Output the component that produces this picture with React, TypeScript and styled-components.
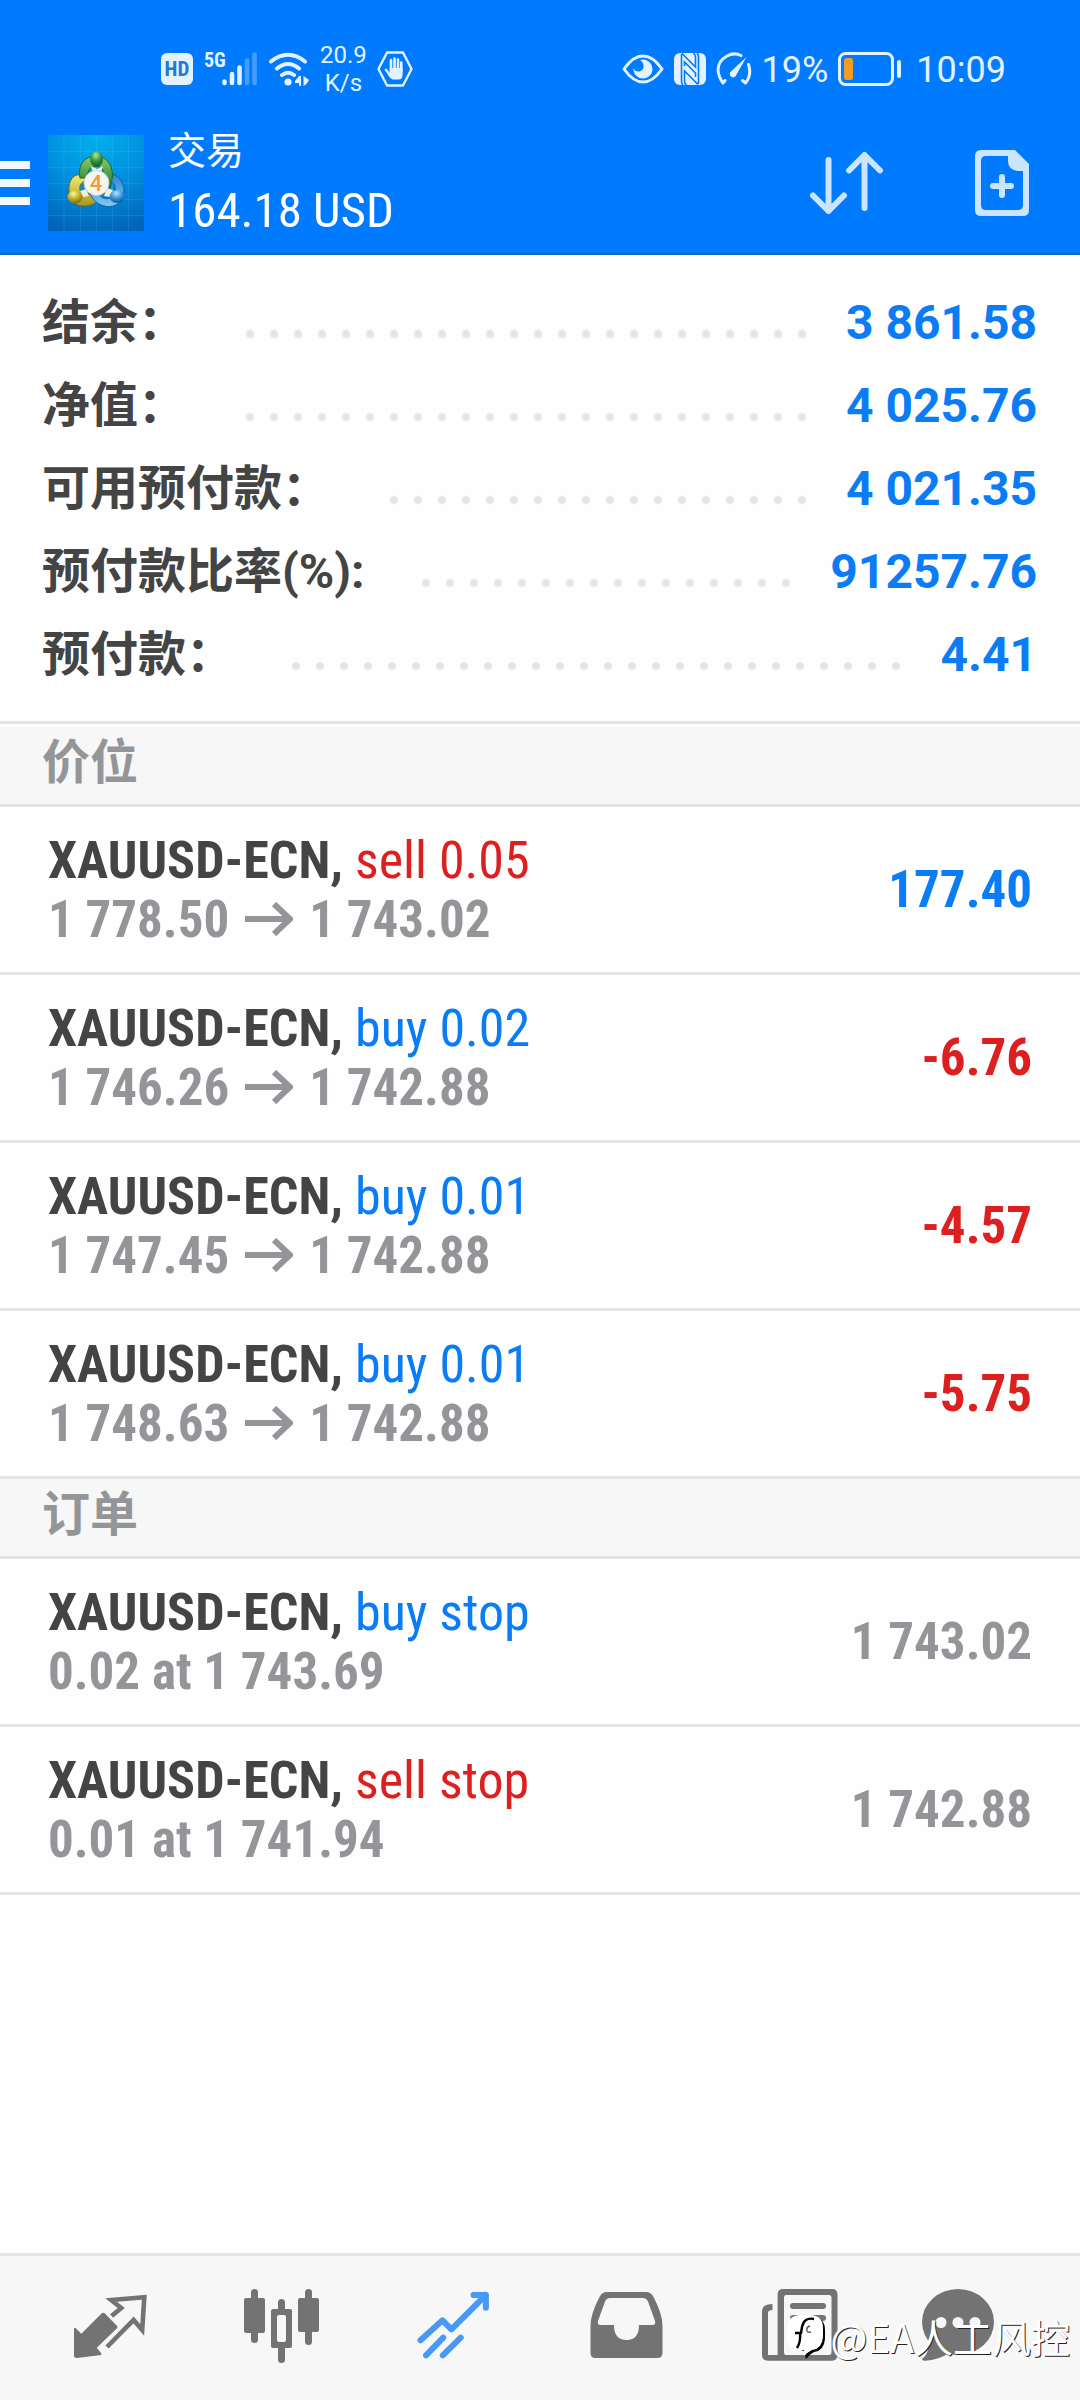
import React from "react";
import styled, { createGlobalStyle } from "styled-components";

const sans = `Roboto, "Noto Sans CJK SC", sans-serif`;
const condensed = `"Roboto Condensed", Roboto, "Noto Sans CJK SC", sans-serif`;

const color = {
  brand: "#007aff",
  pale: "#e4f2ff",
  buy: "#0a7cf5",
  sell: "#dc2020",
  ink: "#444444",
  muted: "#949599",
  line: "#e4e4e4",
  panel: "#f7f7f7",
  icon: "#737373",
  active: "#4799f5",
};

const GlobalStyle = createGlobalStyle`
  *, *::before, *::after { box-sizing: border-box; }
  body { margin: 0; background: #fefefe; font-family: ${sans}; }
  button { border: 0; padding: 0; background: none; font: inherit; color: inherit; cursor: pointer; }
  ul, dl, dd, p, h1, h2 { margin: 0; padding: 0; }
  ul { list-style: none; }
  svg { display: block; flex: none; }
`;

const Screen = styled.div`
  display: flex;
  flex-direction: column;
  min-height: 100vh;
`;

const Header = styled.header`
  background: ${color.brand};
  border-bottom: 2px solid #1767bd;
  color: #fff;
`;

const StatusBar = styled.div`
  display: flex;
  justify-content: space-between;
  align-items: center;
  height: 127px;
  padding: 10px 74px 0 160px;
  color: ${color.pale};
`;

const StatusGroup = styled.div`
  display: flex;
  align-items: center;
  gap: 10px;
`;

const NetworkSpeed = styled.span`
  font-size: 24px;
  line-height: 28px;
  text-align: center;
`;

const StatusText = styled.span`
  padding-top: 2px;
  font-size: 36px;
  line-height: 40px;
`;

const TimeText = styled(StatusText)`
  margin-left: 4px;
`;

const Toolbar = styled.div`
  display: flex;
  align-items: center;
  height: 126px;
  padding-right: 50px;
  padding-bottom: 14px;
`;

const MenuButton = styled.button`
  display: flex;
  flex-direction: column;
  gap: 10px;
  width: 48px;
`;

const MenuBar = styled.span`
  width: 30px;
  height: 8px;
  background: #f0f9ff;
`;

const Titles = styled.div`
  flex: 1;
  padding-left: 24px;
`;

const Title = styled.h1`
  font-size: 38px;
  font-weight: 400;
  line-height: 56px;
`;

const Balance = styled.p`
  font-family: ${condensed};
  font-size: 49px;
  line-height: 64px;
`;

const Actions = styled.div`
  display: flex;
  align-items: center;
  gap: 90px;
`;

const Summary = styled.dl`
  padding: 26px 43px 25px 42px;
  border-bottom: 3px solid ${color.line};
  margin-bottom: 3px;
`;

const SummaryRow = styled.div`
  display: flex;
  align-items: center;
  height: 83px;
`;

const SummaryLabel = styled.dt`
  color: ${color.ink};
  font-size: 48px;
  font-weight: 700;
  line-height: 80px;
`;

const SummaryValue = styled.dd`
  color: ${color.buy};
  font-size: 48px;
  font-weight: 700;
  line-height: 80px;
`;

const Leader = styled.span`
  flex: 1;
  display: flex;
  flex-flow: row-reverse wrap;
  height: 10px;
  margin: 22px 32px 0 40px;
  overflow: hidden;
`;

const Dot = styled.i`
  width: 24px;
  height: 10px;
  background: radial-gradient(circle, ${color.line} 3px, transparent 5px);
`;

const SectionTitle = styled.h2`
  height: 80px;
  padding: 0 42px;
  background: ${color.panel};
  border-bottom: 3px solid ${color.line};
  color: ${color.muted};
  font-size: 48px;
  font-weight: 700;
  line-height: 72px;
`;

const TradeRow = styled.li`
  display: flex;
  align-items: center;
  justify-content: space-between;
  height: 168px;
  padding: 0 48px;
  border-bottom: 3px solid ${color.line};
  font-family: ${condensed};
  font-size: 51px;
  font-weight: 700;
  line-height: 59px;
`;

const Symbol = styled.p`
  color: ${color.ink};
  font-size: 52px;
`;

const Side = styled.span<{ $tone: string }>`
  color: ${(p) => p.$tone};
  font-weight: 400;
`;

const Detail = styled.p`
  display: flex;
  align-items: center;
  gap: 16px;
  color: ${color.muted};
`;

const Amount = styled.span<{ $tone: string }>`
  color: ${(p) => p.$tone};
`;

const Nav = styled.nav`
  position: relative;
  display: flex;
  align-items: center;
  height: 147px;
  margin-top: auto;
  padding: 0 24px;
  background: ${color.panel};
  border-top: 3px solid ${color.line};
`;

const NavLink = styled.a<{ $active?: boolean }>`
  flex: 1;
  display: flex;
  justify-content: center;
  color: ${(p) => (p.$active ? color.active : color.icon)};
`;

const Watermark = styled.div`
  position: absolute;
  right: 10px;
  bottom: 36px;
  display: flex;
  align-items: center;
  gap: 2px;
  color: #fff;
  font-family: "Noto Sans CJK SC", sans-serif;
  font-size: 39px;
  font-weight: 400;
  line-height: 56px;
  text-shadow: 1px 1px 0 #222;
  pointer-events: none;
`;

const Logo = () => (
  <svg width="96" height="96" viewBox="0 0 96 96" role="img" aria-label="MetaTrader 4">
    <defs>
      <radialGradient id="bg" cx="50%" cy="0%" r="105%">
        <stop offset="0" stopColor="#00b2ee" />
        <stop offset="0.5" stopColor="#0090de" />
        <stop offset="1" stopColor="#0064b8" />
      </radialGradient>
      <linearGradient id="green" x1="0" y1="0" x2="0" y2="1">
        <stop offset="0" stopColor="#8ccf72" />
        <stop offset="1" stopColor="#17732c" />
      </linearGradient>
      <linearGradient id="yellow" x1="0" y1="0" x2="0" y2="1">
        <stop offset="0" stopColor="#f4ee70" />
        <stop offset="1" stopColor="#a8951a" />
      </linearGradient>
      <linearGradient id="blue" x1="0" y1="0" x2="0" y2="1">
        <stop offset="0" stopColor="#2c86cf" />
        <stop offset="1" stopColor="#7ccaf5" />
      </linearGradient>
      <radialGradient id="greenBall" cx="45%" cy="25%" r="75%">
        <stop offset="0" stopColor="#b5e8a0" />
        <stop offset="0.5" stopColor="#3f9a40" />
        <stop offset="1" stopColor="#0e5c22" />
      </radialGradient>
      <radialGradient id="yellowBall" cx="40%" cy="25%" r="75%">
        <stop offset="0" stopColor="#fbf7a8" />
        <stop offset="0.5" stopColor="#c4b52c" />
        <stop offset="1" stopColor="#7d6c0c" />
      </radialGradient>
      <radialGradient id="blueBall" cx="45%" cy="25%" r="75%">
        <stop offset="0" stopColor="#b8e6ff" />
        <stop offset="0.5" stopColor="#3c9ade" />
        <stop offset="1" stopColor="#0c5499" />
      </radialGradient>
    </defs>
    <rect width="96" height="96" fill="url(#bg)" />
    <path d="M16 0V96M32.500 0V96M48.500 0V96M64.500 0V96M80.500 0V96M0 16.500H96M0 32.500H96M0 48.500H96M0 64.500H96M0 80.500H96" stroke="#7fd4ff" strokeOpacity="0.14" />
    <path d="M29 40C17 43 18 70 34 71C44 72 52 66 55 58L46 54C42 63 33 61 32 55C31 50 34 46 39 46L41 39Z" fill="url(#yellow)" stroke="#766b12" />
    <path d="M65 39C76 44 80 58 71 68C61 76 45 70 41 56L50 57C53 65 62 66 66 59C69 52 66 46 60 45Z" fill="url(#blue)" stroke="#185c9d" />
    <path d="M32 43C29 27 40 20 50 21C62 23 69 37 61 54L53 51C58 42 57 32 49 31C42 31 39 36 40 43Z" fill="url(#green)" stroke="#17682a" />
    <path d="M43 31L49 34L55 31L53 38H45ZM32 56L35 62L41 61L38 54ZM65 55L62 62L56 61L59 53Z" fill="#e9f3df" />
    <ellipse cx="48.500" cy="24" rx="6.500" ry="7.500" fill="url(#greenBall)" />
    <ellipse cx="27" cy="62" rx="7.500" ry="6.500" fill="url(#yellowBall)" />
    <ellipse cx="69" cy="61.500" rx="7.500" ry="6.500" fill="url(#blueBall)" />
    <circle cx="48.500" cy="48" r="12.500" fill="#f5f5f3" stroke="#c9ccc5" strokeWidth="0.800" />
    <text x="48" y="56" textAnchor="middle" fontFamily="Roboto" fontWeight="500" fontSize="22" fill="#f39a38">4</text>
  </svg>
);

const HdIcon = () => (
  <svg width="34" height="34" viewBox="0 0 34 34">
    <rect x="1" y="1" width="32" height="32" rx="6" fill={color.pale} />
    <text x="17" y="24" textAnchor="middle" fontFamily="Roboto Condensed" fontWeight="700" fontSize="21" fill="#2478d8">HD</text>
  </svg>
);

const SignalIcon = () => (
  <svg width="54" height="46" viewBox="0 -6 54 46">
    <text x="0" y="15" fontFamily="Roboto Condensed" fontWeight="700" fontSize="20" fill={color.pale}>5G</text>
    <g strokeWidth="4.600" strokeLinecap="round" stroke={color.pale}>
      <path d="M20.500 29.500V31M28 22V31M35.500 15.500V31" />
      <path d="M43 8.500V31M50.500 2.500V31" opacity="0.300" />
    </g>
  </svg>
);

const WifiIcon = () => (
  <svg width="42" height="34" viewBox="0 0 42 34">
    <g fill="none" stroke={color.pale} strokeWidth="4" strokeLinecap="round">
      <path d="M3 9.500Q20 -4 37 9.500M9 16.500Q20 7.500 31 16.500M14 23Q20 18.500 26 23" />
    </g>
    <circle cx="20" cy="30" r="3.600" fill={color.pale} />
    <path d="M33 24V34H31V31H27V29L31 24ZM35.500 24L41 28L38.500 32L35.500 34Z" fill={color.pale} />
  </svg>
);

const HandIcon = () => (
  <svg width="36" height="36" viewBox="0 0 36 36">
    <path d="M10 1.500H26L34.500 18L26 34.500H10L1.500 18Z" fill="none" stroke={color.pale} strokeWidth="2.400" strokeLinejoin="round" />
    <g fill="none" stroke={color.pale} strokeWidth="2.600" strokeLinecap="round">
      <path d="M14 9V19M17.500 7.500V19M21 8.500V19M24.300 11.500V20M9 19L14 25" />
    </g>
    <path d="M12.700 17H25.600V24Q25 28.500 22 28.500H16Q13 28 10 22L12.700 23Z" fill={color.pale} />
  </svg>
);

const EyeIcon = () => (
  <svg width="42" height="30" viewBox="0 0 42 30">
    <path d="M2 15Q11 2 21 2Q31 2 40 15Q31 28 21 28Q11 28 2 15Z" fill="none" stroke={color.pale} strokeWidth="3" strokeLinejoin="round" />
    <path d="M18 6A9.500 9.500 0 1 1 11.500 14Q13 18 17.500 17.500Q22 16 21.500 11Q21 7.500 18 6Z" fill={color.pale} />
  </svg>
);

const NfcIcon = () => (
  <svg width="32" height="34" viewBox="0 0 32 34">
    <rect y="1" width="32" height="32" rx="6" fill={color.pale} />
    <path d="M8 1.500L21.500 15V5Q21.500 2.500 19.500 1M24 32.500L10.500 19V29Q10.500 31.500 12.500 33M7.500 2V29Q7.500 32 9 33M24.500 32V5Q24.500 2 23 1M10.500 14V10L21.500 21V25" fill="none" stroke={color.brand} strokeWidth="1.600" />
  </svg>
);

const GaugeIcon = () => (
  <svg width="36" height="34" viewBox="0 0 36 34">
    <g fill="none" stroke={color.pale} strokeWidth="3" strokeLinecap="round" strokeLinejoin="round">
      <path d="M25 3.500Q18 0 11 4Q2 9 2 18Q2.500 25 7 31L9 28.500M32.500 12.500Q36 23 29.500 31L26.500 28.500" />
    </g>
    <path d="M30.500 5L20.500 22.500A3.400 3.400 0 1 1 15.500 19Z" fill={color.pale} />
  </svg>
);

const BatteryIcon = () => (
  <svg width="64" height="34" viewBox="0 0 64 34">
    <rect x="1.500" y="1.500" width="53" height="31" rx="6" fill="none" stroke={color.pale} strokeWidth="3" />
    <rect x="6" y="6" width="9" height="22" rx="2.500" fill="#f59a23" />
    <rect x="59" y="8" width="4" height="18" rx="2" fill={color.pale} />
  </svg>
);

const SortIcon = () => (
  <svg width="74" height="66" viewBox="0 0 74 66" fill="none" stroke="#cbe4ff" strokeWidth="6" strokeLinecap="round" strokeLinejoin="round">
    <path d="M18.500 10V61M3 45.500L18.500 61L34 45.500M54.500 58V5M39 20.500L54.500 5L70 20.500" />
  </svg>
);

const NewOrderIcon = () => (
  <svg width="56" height="66" viewBox="0 0 56 66">
    <path d="M7 0H41L55 14V60Q55 66 49 66H7Q1 66 1 60V6Q1 0 7 0ZM34 6H12Q7 6 7 11V55Q7 60 12 60H44Q49 60 49 55V21H44Q34 20 34 11Z" fill="#cbe4ff" fillRule="evenodd" />
    <path d="M28 27V45M19 36H37" stroke="#cbe4ff" strokeWidth="6" strokeLinecap="round" />
  </svg>
);

const PriceArrow = () => (
  <svg width="48" height="34" viewBox="0 0 48 34" fill="none" stroke={color.muted} strokeWidth="6">
    <path d="M0 17H45M29 2L45 17L29 32" />
  </svg>
);

const NavIcon = ({ children }: { children: React.ReactNode }) => (
  <svg width="96" height="96" viewBox="0 0 96 96" fill="currentColor">{children}</svg>
);

const navItems = [
  {
    label: "行情",
    icon: (
      <>
        <path d="M12 48.700Q12 47.500 13.500 48L19.300 53.700L39.500 33.600Q41.300 32 43 33.600L55 46Q56 47.200 55 48.200L34.800 67.700L39.600 73.700L39 75L15 78Q12 78 12 75.500Z" />
        <path d="M49.600 36L59.200 28L49.200 20L82.300 17.200L80.200 50L71.600 40L45 67" fill="none" stroke="currentColor" strokeWidth="4.600" />
      </>
    ),
  },
  {
    label: "图表",
    icon: (
      <>
        <rect x="10" y="18" width="21" height="35" rx="2" />
        <rect x="17" y="9" width="7" height="54" rx="3.500" />
        <path d="M39 29H56Q58 29 58 31V66Q58 68 56 68H39Q37 68 37 66V31Q37 29 39 29ZM45 35Q43 35 43 37V60Q43 62 45 62H50Q52 62 52 60V37Q52 35 50 35Z" fillRule="evenodd" />
        <path d="M44 30V22.500A3.500 3.500 0 0 1 51 22.500V30ZM44 67V79.500A3.500 3.500 0 0 0 51 79.500V67Z" />
        <rect x="64" y="18" width="21" height="34" rx="2" />
        <rect x="71" y="9" width="7" height="56" rx="3.500" />
      </>
    ),
  },
  {
    label: "交易",
    active: true,
    icon: (
      <path
        d="M14.500 60.300L36.500 40.300L45.400 49.300L79.900 15M67.500 15H79.900V27.700M20 75.300L37.200 57.700M36.800 75.300L54.700 57.700"
        fill="none"
        stroke="currentColor"
        strokeWidth="6"
        strokeLinecap="round"
        strokeLinejoin="round"
      />
    ),
  },
  {
    label: "历史",
    icon: (
      <path
        d="M29 12H68Q73 12 75.500 17Q84.500 34 84.500 46V73Q84.500 78 79.500 78H17.500Q12.500 78 12.500 73V46Q12.500 34 21.500 17Q24 12 29 12ZM32 18Q28.500 18 27 21.500L20 41Q19 45 22.500 45H36Q36 60 48.500 60Q61 60 61 45H74.500Q78 45 77 41L70 21.500Q68.500 18 65 18Z"
        fillRule="evenodd"
      />
    ),
  },
  {
    label: "新闻",
    icon: (
      <>
        <path d="M33 9H82Q87.500 9 87.500 14.500V75Q87.500 80.700 82 80.700H18Q12 80.700 12 75V31Q12 24 22.500 24V30Q18 30 18 33V75H27.600V14.500Q27.600 9 33 9ZM36 15Q34 15 34 18V72Q34 75 36 75H79Q81.500 75 81.500 72V18Q81.500 15 79 15Z" fillRule="evenodd" />
        <rect x="40" y="23" width="36" height="6" rx="3" />
        <rect x="40" y="35" width="15" height="22" rx="3" />
        <rect x="60" y="35" width="16" height="6" rx="3" />
      </>
    ),
  },
  {
    label: "消息",
    icon: (
      <>
        <ellipse cx="36" cy="42" rx="36" ry="33" />
        <path d="M7 60Q8 73 0 79Q0 81 3 80.700Q17 80 27 73Z" />
        <g fill={color.panel}>
          <circle cx="19" cy="42.500" r="5.500" />
          <circle cx="36" cy="42.500" r="5.500" />
          <circle cx="53" cy="42.500" r="5.500" />
        </g>
      </>
    ),
  },
];

const BadgeIcon = () => (
  <svg width="42" height="46" viewBox="0 0 42 46">
    <path d="M14 4H27Q39 5 39 17V26Q38 38 28 39Q24 41 20 46L18 38L6 34Z" fill="#000" />
    <path d="M13 2H25Q37 3 37 15V24Q36 36 26 37Q22 39 18 43L18 37Q4 38 1 26V14Q2 3 13 2Z" fill="#fff" />
    <path d="M28 6Q18 4 16 14L15 20H9M14 20Q15 29 11 35" fill="none" stroke="#000" strokeWidth="2.400" />
    <path d="M24 13Q20 14 21 18Q22 20 25 19" fill="none" stroke="#555" strokeWidth="1.400" />
  </svg>
);

const summary = [
  { label: "结余：", value: "3 861.58" },
  { label: "净值：", value: "4 025.76" },
  { label: "可用预付款：", value: "4 021.35" },
  { label: "预付款比率(%):", value: "91257.76" },
  { label: "预付款：", value: "4.41" },
];

const positions = [
  { side: "sell", volume: "0.05", open: "1 778.50", current: "1 743.02", profit: "177.40" },
  { side: "buy", volume: "0.02", open: "1 746.26", current: "1 742.88", profit: "-6.76" },
  { side: "buy", volume: "0.01", open: "1 747.45", current: "1 742.88", profit: "-4.57" },
  { side: "buy", volume: "0.01", open: "1 748.63", current: "1 742.88", profit: "-5.75" },
];

const orders = [
  { side: "buy", detail: "0.02 at 1 743.69", price: "1 743.02" },
  { side: "sell", detail: "0.01 at 1 741.94", price: "1 742.88" },
];

const sideTone = (side: string) => (side === "buy" ? color.buy : color.sell);

const dots = Array.from({ length: 60 }, (_, i) => i);

export default function App() {
  return (
    <Screen>
      <GlobalStyle />
      <Header>
        <StatusBar>
          <StatusGroup>
            <HdIcon />
            <SignalIcon />
            <WifiIcon />
            <NetworkSpeed>
              20.9
              <br />
              K/s
            </NetworkSpeed>
            <HandIcon />
          </StatusGroup>
          <StatusGroup>
            <EyeIcon />
            <NfcIcon />
            <GaugeIcon />
            <StatusText>19%</StatusText>
            <BatteryIcon />
            <TimeText>10:09</TimeText>
          </StatusGroup>
        </StatusBar>
        <Toolbar>
          <MenuButton aria-label="菜单">
            <MenuBar />
            <MenuBar />
            <MenuBar />
          </MenuButton>
          <Logo />
          <Titles>
            <Title>交易</Title>
            <Balance>164.18 USD</Balance>
          </Titles>
          <Actions>
            <button aria-label="排序">
              <SortIcon />
            </button>
            <button aria-label="新订单">
              <NewOrderIcon />
            </button>
          </Actions>
        </Toolbar>
      </Header>

      <main>
        <Summary>
          {summary.map((row) => (
            <SummaryRow key={row.label}>
              <SummaryLabel>{row.label}</SummaryLabel>
              <Leader aria-hidden="true">
                {dots.map((i) => (
                  <Dot key={i} />
                ))}
              </Leader>
              <SummaryValue>{row.value}</SummaryValue>
            </SummaryRow>
          ))}
        </Summary>

        <section>
          <SectionTitle>价位</SectionTitle>
          <ul>
            {positions.map((p) => (
              <TradeRow key={p.open}>
                <div>
                  <Symbol>
                    XAUUSD-ECN, <Side $tone={sideTone(p.side)}>{p.side} {p.volume}</Side>
                  </Symbol>
                  <Detail>
                    <span>{p.open}</span>
                    <PriceArrow />
                    <span>{p.current}</span>
                  </Detail>
                </div>
                <Amount $tone={p.profit.startsWith("-") ? color.sell : color.buy}>{p.profit}</Amount>
              </TradeRow>
            ))}
          </ul>
        </section>

        <section>
          <SectionTitle>订单</SectionTitle>
          <ul>
            {orders.map((o) => (
              <TradeRow key={o.detail}>
                <div>
                  <Symbol>
                    XAUUSD-ECN, <Side $tone={sideTone(o.side)}>{o.side} stop</Side>
                  </Symbol>
                  <Detail>{o.detail}</Detail>
                </div>
                <Amount $tone={color.muted}>{o.price}</Amount>
              </TradeRow>
            ))}
          </ul>
        </section>
      </main>

      <Nav>
        {navItems.map((item) => (
          <NavLink key={item.label} href="#" aria-label={item.label} $active={item.active}>
            <NavIcon>{item.icon}</NavIcon>
          </NavLink>
        ))}
        <Watermark>
          <BadgeIcon />
          <span>@EA人工风控</span>
        </Watermark>
      </Nav>
    </Screen>
  );
}
